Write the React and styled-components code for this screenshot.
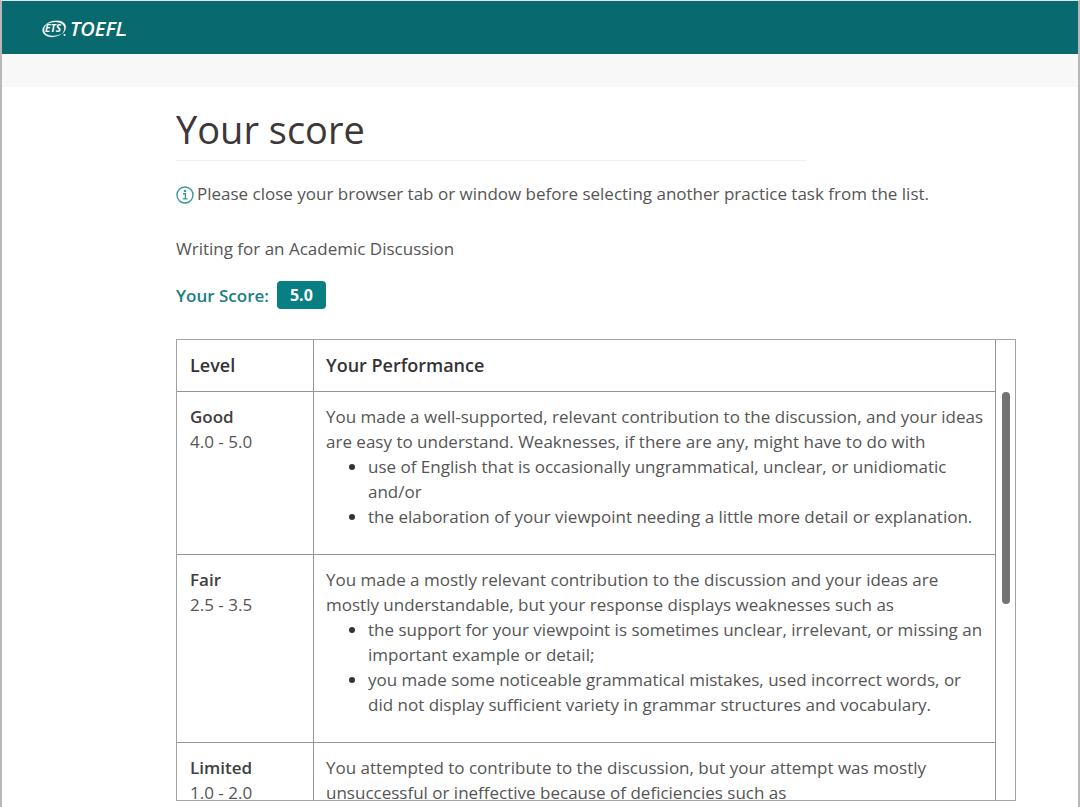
import React from "react";
import styled, { createGlobalStyle } from "styled-components";

const GlobalStyle = createGlobalStyle`
  *, *::before, *::after { box-sizing: border-box; }
  body {
    margin: 0;
    background: #fff;
    color: #555;
    font-family: "Open Sans", "Noto Sans", sans-serif;
    font-size: 17px;
    line-height: 25px;
  }
`;

const Page = styled.div`
  display: flex;
  flex-direction: column;
  height: 100vh;
  min-height: 640px;
  border: 2px solid #b8b8b8;
  border-top: 1px solid #dfe5e5;
  border-bottom: 0;
`;

const Header = styled.header`
  display: flex;
  flex: none;
  align-items: center;
  height: 53px;
  padding: 2px 40px 0;
  background: #086a6f;
`;

const HomeLink = styled.a`
  display: flex;
  color: #fff;
  text-decoration: none;
`;

const Logo = styled.svg`
  display: block;
  width: 88px;
  height: 32px;
  overflow: visible;
`;

const SubBar = styled.div`
  flex: none;
  height: 33px;
  background: #f8f8f8;
`;

const Main = styled.main`
  display: flex;
  flex: 1;
  flex-direction: column;
  min-height: 0;
  padding: 15px 62px 6px 174px;
`;

const Title = styled.h1`
  width: 75%;
  margin: 0 0 20px;
  padding-bottom: 3px;
  border-bottom: 1px solid #f0f0f0;
  color: #3d3737;
  font-size: 38px;
  font-weight: 400;
  line-height: 55px;
`;

const Notice = styled.p`
  display: flex;
  align-items: center;
  gap: 3px;
  margin: 0 0 30px;
`;

const InfoIcon = styled.svg`
  flex: none;
  width: 18px;
  height: 18px;
  margin-top: 3px;
`;

const TaskName = styled.h2`
  margin: 0 0 20px;
  font-size: inherit;
  font-weight: 400;
`;

const ScoreLine = styled.p`
  display: flex;
  align-items: center;
  gap: 8px;
  margin: 0 0 30px;
  color: #1a8083;
  font-weight: 600;
`;

const ScoreBadge = styled.span`
  padding: 2px 13px;
  border-radius: 4px;
  background: #087f82;
  color: #fff;
  font-size: 16px;
  font-weight: 700;
  line-height: 24px;
`;

const Panel = styled.section`
  display: flex;
  flex: 1;
  min-height: 0;
  border: 1px solid #a3a3a3;
`;

const ScrollArea = styled.div`
  flex: 1;
  min-width: 0;
  overflow-y: auto;
  scrollbar-width: none;
`;

const Levels = styled.table`
  width: 100%;
  border-collapse: separate;
  border-spacing: 0;
  table-layout: fixed;
`;

const HeadCell = styled.th`
  position: sticky;
  top: 0;
  width: ${(p) => p.$width || "auto"};
  padding: 13px 12px;
  border-right: 1px solid #969696;
  border-bottom: 1px solid #969696;
  background: #fff;
  color: #333;
  font-size: 18px;
  font-weight: 600;
  text-align: left;

  &:first-child { padding-left: 13px; }
`;

const LevelCell = styled.th`
  padding: 12px 13px 25px;
  border-right: 1px solid #969696;
  border-bottom: 1px solid #969696;
  font-weight: 400;
  text-align: left;
  vertical-align: top;
`;

const LevelName = styled.strong`
  display: block;
  color: #404040;
  font-weight: 600;
`;

const TextCell = styled.td`
  padding: 12px 8px 25px 12px;
  border-right: 1px solid #969696;
  border-bottom: 1px solid #969696;
  vertical-align: top;
`;

const Points = styled.ul`
  margin: 0;
  padding: 0 0 0 42px;

  li::marker { color: #333; }
`;

const Track = styled.div`
  flex: none;
  width: 19px;
  padding: 52px 5px 0 6px;
`;

const Thumb = styled.div`
  height: 52%;
  border-radius: 4px;
  background: #737373;
`;

const levels = [
  {
    name: "Good",
    range: "4.0 - 5.0",
    intro:
      "You made a well-supported, relevant contribution to the discussion, and your ideas are easy to understand. Weaknesses, if there are any, might have to do with",
    points: [
      "use of English that is occasionally ungrammatical, unclear, or unidiomatic and/or",
      "the elaboration of your viewpoint needing a little more detail or explanation.",
    ],
  },
  {
    name: "Fair",
    range: "2.5 - 3.5",
    intro:
      "You made a mostly relevant contribution to the discussion and your ideas are mostly understandable, but your response displays weaknesses such as",
    points: [
      "the support for your viewpoint is sometimes unclear, irrelevant, or missing an important example or detail;",
      "you made some noticeable grammatical mistakes, used incorrect words, or did not display sufficient variety in grammar structures and vocabulary.",
    ],
  },
  {
    name: "Limited",
    range: "1.0 - 2.0",
    intro:
      "You attempted to contribute to the discussion, but your attempt was mostly unsuccessful or ineffective because of deficiencies such as",
    points: [],
  },
];

export default function App() {
  return (
    <Page>
      <GlobalStyle />
      <Header>
        <HomeLink href="#" aria-label="ETS TOEFL">
          <Logo viewBox="0 0 88 32" fill="#fff">
            <path
              d="M2.500 13C5.500 9 11 7.300 16 7.800C21.500 8.300 24.800 11.500 23.500 16C22.800 18.500 21.300 20 20 21C21.200 19.500 22 18.300 22.300 16C22.800 12.300 20 9.700 15.500 9.200C10.500 8.700 6 10 2.500 13Z"
              stroke="#fff"
              strokeWidth=".2"
            />
            <path
              d="M3 12.200C1.200 14 .300 16 .600 18C1.200 21.800 5.500 24.200 10.500 23.900C13.500 23.700 16.500 22.800 19 21.300C16.500 22.300 13.500 22.900 10.800 22.900C6 22.900 2.500 20.800 2.200 17.500C2 15.500 2.500 13.700 4 12Z"
              stroke="#fff"
              strokeWidth=".3"
            />
            <text x="3" y="19" fontFamily="Open Sans, sans-serif" fontSize="10" fontWeight="700" fontStyle="italic">ETS</text>
            <circle cx="22.500" cy="22" r="1" />
            <text x="28" y="23" fontFamily="Open Sans, sans-serif" fontSize="20" fontWeight="600" fontStyle="italic">TOEFL</text>
            <circle cx="83" cy="22" r="1" />
          </Logo>
        </HomeLink>
      </Header>
      <SubBar />
      <Main>
        <Title>Your score</Title>
        <Notice>
          <InfoIcon viewBox="0 0 18 18" fill="none" stroke="#3a9799" strokeWidth="1.4" aria-hidden="true">
            <circle cx="9" cy="9" r="8" />
            <path d="M7 7.700H9.400V12.700M6.700 12.900H11.500" />
            <circle cx="9" cy="5" r=".6" fill="#3a9799" />
          </InfoIcon>
          Please close your browser tab or window before selecting another practice task from the list.
        </Notice>
        <TaskName>Writing for an Academic Discussion</TaskName>
        <ScoreLine>
          Your Score: <ScoreBadge>5.0</ScoreBadge>
        </ScoreLine>
        <Panel>
          <ScrollArea tabIndex={0}>
            <Levels>
              <thead>
                <tr>
                  <HeadCell scope="col" $width="137px">Level</HeadCell>
                  <HeadCell scope="col">Your Performance</HeadCell>
                </tr>
              </thead>
              <tbody>
                {levels.map((level) => (
                  <tr key={level.name}>
                    <LevelCell scope="row">
                      <LevelName>{level.name}</LevelName>
                      {level.range}
                    </LevelCell>
                    <TextCell>
                      {level.intro}
                      {level.points.length > 0 && (
                        <Points>
                          {level.points.map((point) => (
                            <li key={point}>{point}</li>
                          ))}
                        </Points>
                      )}
                    </TextCell>
                  </tr>
                ))}
              </tbody>
            </Levels>
          </ScrollArea>
          <Track>
            <Thumb />
          </Track>
        </Panel>
      </Main>
    </Page>
  );
}
